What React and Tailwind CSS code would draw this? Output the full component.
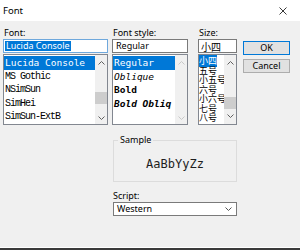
import React from "react";

const Chev = ({ dir = "down", color = "#606060" }) => (
  <svg width="7" height="4" viewBox="0 0 7 4">
    <polyline
      points={dir === "down" ? "0.5,0.5 3.5,3.5 6.5,0.5" : "0.5,3.5 3.5,0.5 6.5,3.5"}
      fill="none"
      stroke={color}
      strokeWidth="1"
    />
  </svg>
);

const ScrollBar = ({ thumbTop, thumb = true, up = "h-[16px]", down = "h-[13px]", color }) => (
  <div className="w-[12px] flex flex-col bg-[#f0f0f0] shrink-0">
    <div className={`${up} flex items-center justify-center`}>
      <Chev dir="up" color={color} />
    </div>
    <div className="flex-1 flex flex-col">
      {thumb && <div className="h-[12px] bg-[#cdcdcd]" style={{ marginTop: thumbTop }} />}
    </div>
    <div className={`${down} flex items-center justify-center`}>
      <Chev dir="down" color={color} />
    </div>
  </div>
);

const mono = "font-['DejaVu_Sans_Mono',monospace]";

export default function App() {
  return (
    <div className="w-[300px] h-[250px] bg-[#f0f0f0] flex flex-col overflow-hidden font-['Noto_Sans','Liberation_Sans',sans-serif] text-[9px] text-black">
      {/* title bar */}
      <div className="h-[21px] bg-white flex items-center justify-between pl-[3px] pr-[13px] shrink-0">
        <span className="text-[9.5px] leading-[12px]">Font</span>
        <svg width="8" height="8" viewBox="0 0 8 8">
          <path d="M0.5 0.5 L7.5 7.5 M7.5 0.5 L0.5 7.5" stroke="#222" strokeWidth="0.9" />
        </svg>
      </div>

      {/* top row */}
      <div className="flex pl-[3px] pt-[6px]">
        {/* Font column */}
        <div className="w-[105px] flex flex-col">
          <div className="h-[12px] leading-[12px] pl-[1px]">Font:</div>
          <div className="h-[14px] border border-[#6fa8dc] bg-white flex items-center pl-[1px]">
            <span className="bg-[#0078d7] text-white leading-[10px] px-[1px]">Lucida Console</span>
          </div>
          <div className="h-[71px] mt-[1px] border border-[#828790] bg-white flex">
            <div className="flex-1 flex flex-col pt-[1px] overflow-hidden">
              <div className={`h-[13.5px] leading-[13.5px] bg-[#0078d7] text-white ${mono} text-[9.5px] pl-[1px] whitespace-nowrap`}>
                Lucida Console
              </div>
              {["MS Gothic", "NSimSun", "SimHei", "SimSun-ExtB"].map((t) => (
                <div
                  key={t}
                  className="h-[13.5px] leading-[13.5px] font-['Liberation_Mono',monospace] text-[10px] tracking-[-1px] pl-[1px] whitespace-nowrap"
                >
                  {t}
                </div>
              ))}
            </div>
            <ScrollBar thumbTop="21px" up="h-[16px]" down="h-[12px]" />
          </div>
        </div>

        {/* Font style column */}
        <div className="w-[76px] ml-[4px] flex flex-col">
          <div className="h-[12px] leading-[12px] pl-[1px]">Font style:</div>
          <div className="h-[14px] border border-[#7a7a7a] bg-white flex items-center pl-[3px] leading-[10px]">
            Regular
          </div>
          <div className="h-[71px] mt-[1px] border border-[#828790] bg-white flex">
            <div className={`flex-1 flex flex-col pt-[1px] overflow-hidden ${mono} text-[9.5px]`}>
              <div className="h-[13.5px] leading-[13.5px] bg-[#0078d7] text-white pl-[1px] whitespace-nowrap">Regular</div>
              <div className="h-[13.5px] leading-[13.5px] italic pl-[1px] whitespace-nowrap">Oblique</div>
              <div className="h-[13.5px] leading-[13.5px] font-bold pl-[1px] whitespace-nowrap">Bold</div>
              <div className="h-[13.5px] leading-[13.5px] font-bold italic pl-[1px] whitespace-nowrap">Bold Obliq</div>
            </div>
            <ScrollBar thumb={false} up="h-[16px]" down="h-[12px]" color="#c8c8c8" />
          </div>
        </div>

        {/* Size column */}
        <div className="w-[39px] ml-[10px] flex flex-col">
          <div className="h-[12px] leading-[12px] pl-[1px]">Size:</div>
          <div className="h-[14px] border border-[#7a7a7a] bg-white flex items-center pl-[2px] font-['Noto_Sans_CJK_SC',sans-serif] text-[10px] leading-[11px]">
            小四
          </div>
          <div className="h-[71px] mt-[1px] border border-[#828790] bg-white flex">
            <div className="flex-1 flex flex-col pt-[1px] font-['Noto_Sans_CJK_SC',sans-serif] text-[9px] min-w-0 overflow-hidden">
              <div className="h-[9.5px] leading-[9.5px] whitespace-nowrap">
                <span className="bg-[#0078d7] text-white">小四</span>
              </div>
              {["五号", "小五号", "六号", "小六号", "七号", "八号"].map((t) => (
                <div key={t} className="h-[9.5px] leading-[9.5px] whitespace-nowrap">
                  {t}
                </div>
              ))}
            </div>
            <ScrollBar thumbTop="26px" up="h-[16px]" down="h-[16px]" />
          </div>
        </div>

        {/* Buttons */}
        <div className="w-[47px] ml-[6px] flex flex-col pt-[14px] gap-[4px]">
          <div className="h-[14px] border border-[#0078d7] bg-[#e1e1e1] flex items-center justify-center leading-[10px]">
            <div className="w-full h-full border border-[#e1e1e1] flex items-center justify-center">OK</div>
          </div>
          <div className="h-[14px] border border-[#adadad] bg-[#e1e1e1] flex items-center justify-center leading-[10px]">
            Cancel
          </div>
        </div>
      </div>

      {/* Lower section */}
      <div className="ml-[113px] w-[124px] flex flex-col">
        <fieldset className="mt-[10px] h-[47px] border border-[#dcdcdc] block">
          <legend className="ml-[4px] px-[2px] leading-[10px]">Sample</legend>
          <div className={`${mono} text-[12px] leading-[14px] text-[#1e1e1e] text-center mt-[12px]`}>AaBbYyZz</div>
        </fieldset>
        <div className="mt-[8px] h-[12px] leading-[12px]">Script:</div>
        <div className="h-[14px] border border-[#7a7a7a] bg-white flex items-center justify-between pl-[3px] pr-[4px] leading-[10px]">
          <span>Western</span>
          <Chev dir="down" color="#555" />
        </div>
      </div>

      <div className="mt-auto h-[1px] bg-white" />
      <div className="h-[2px] bg-[#3a3a3a]" />
    </div>
  );
}
